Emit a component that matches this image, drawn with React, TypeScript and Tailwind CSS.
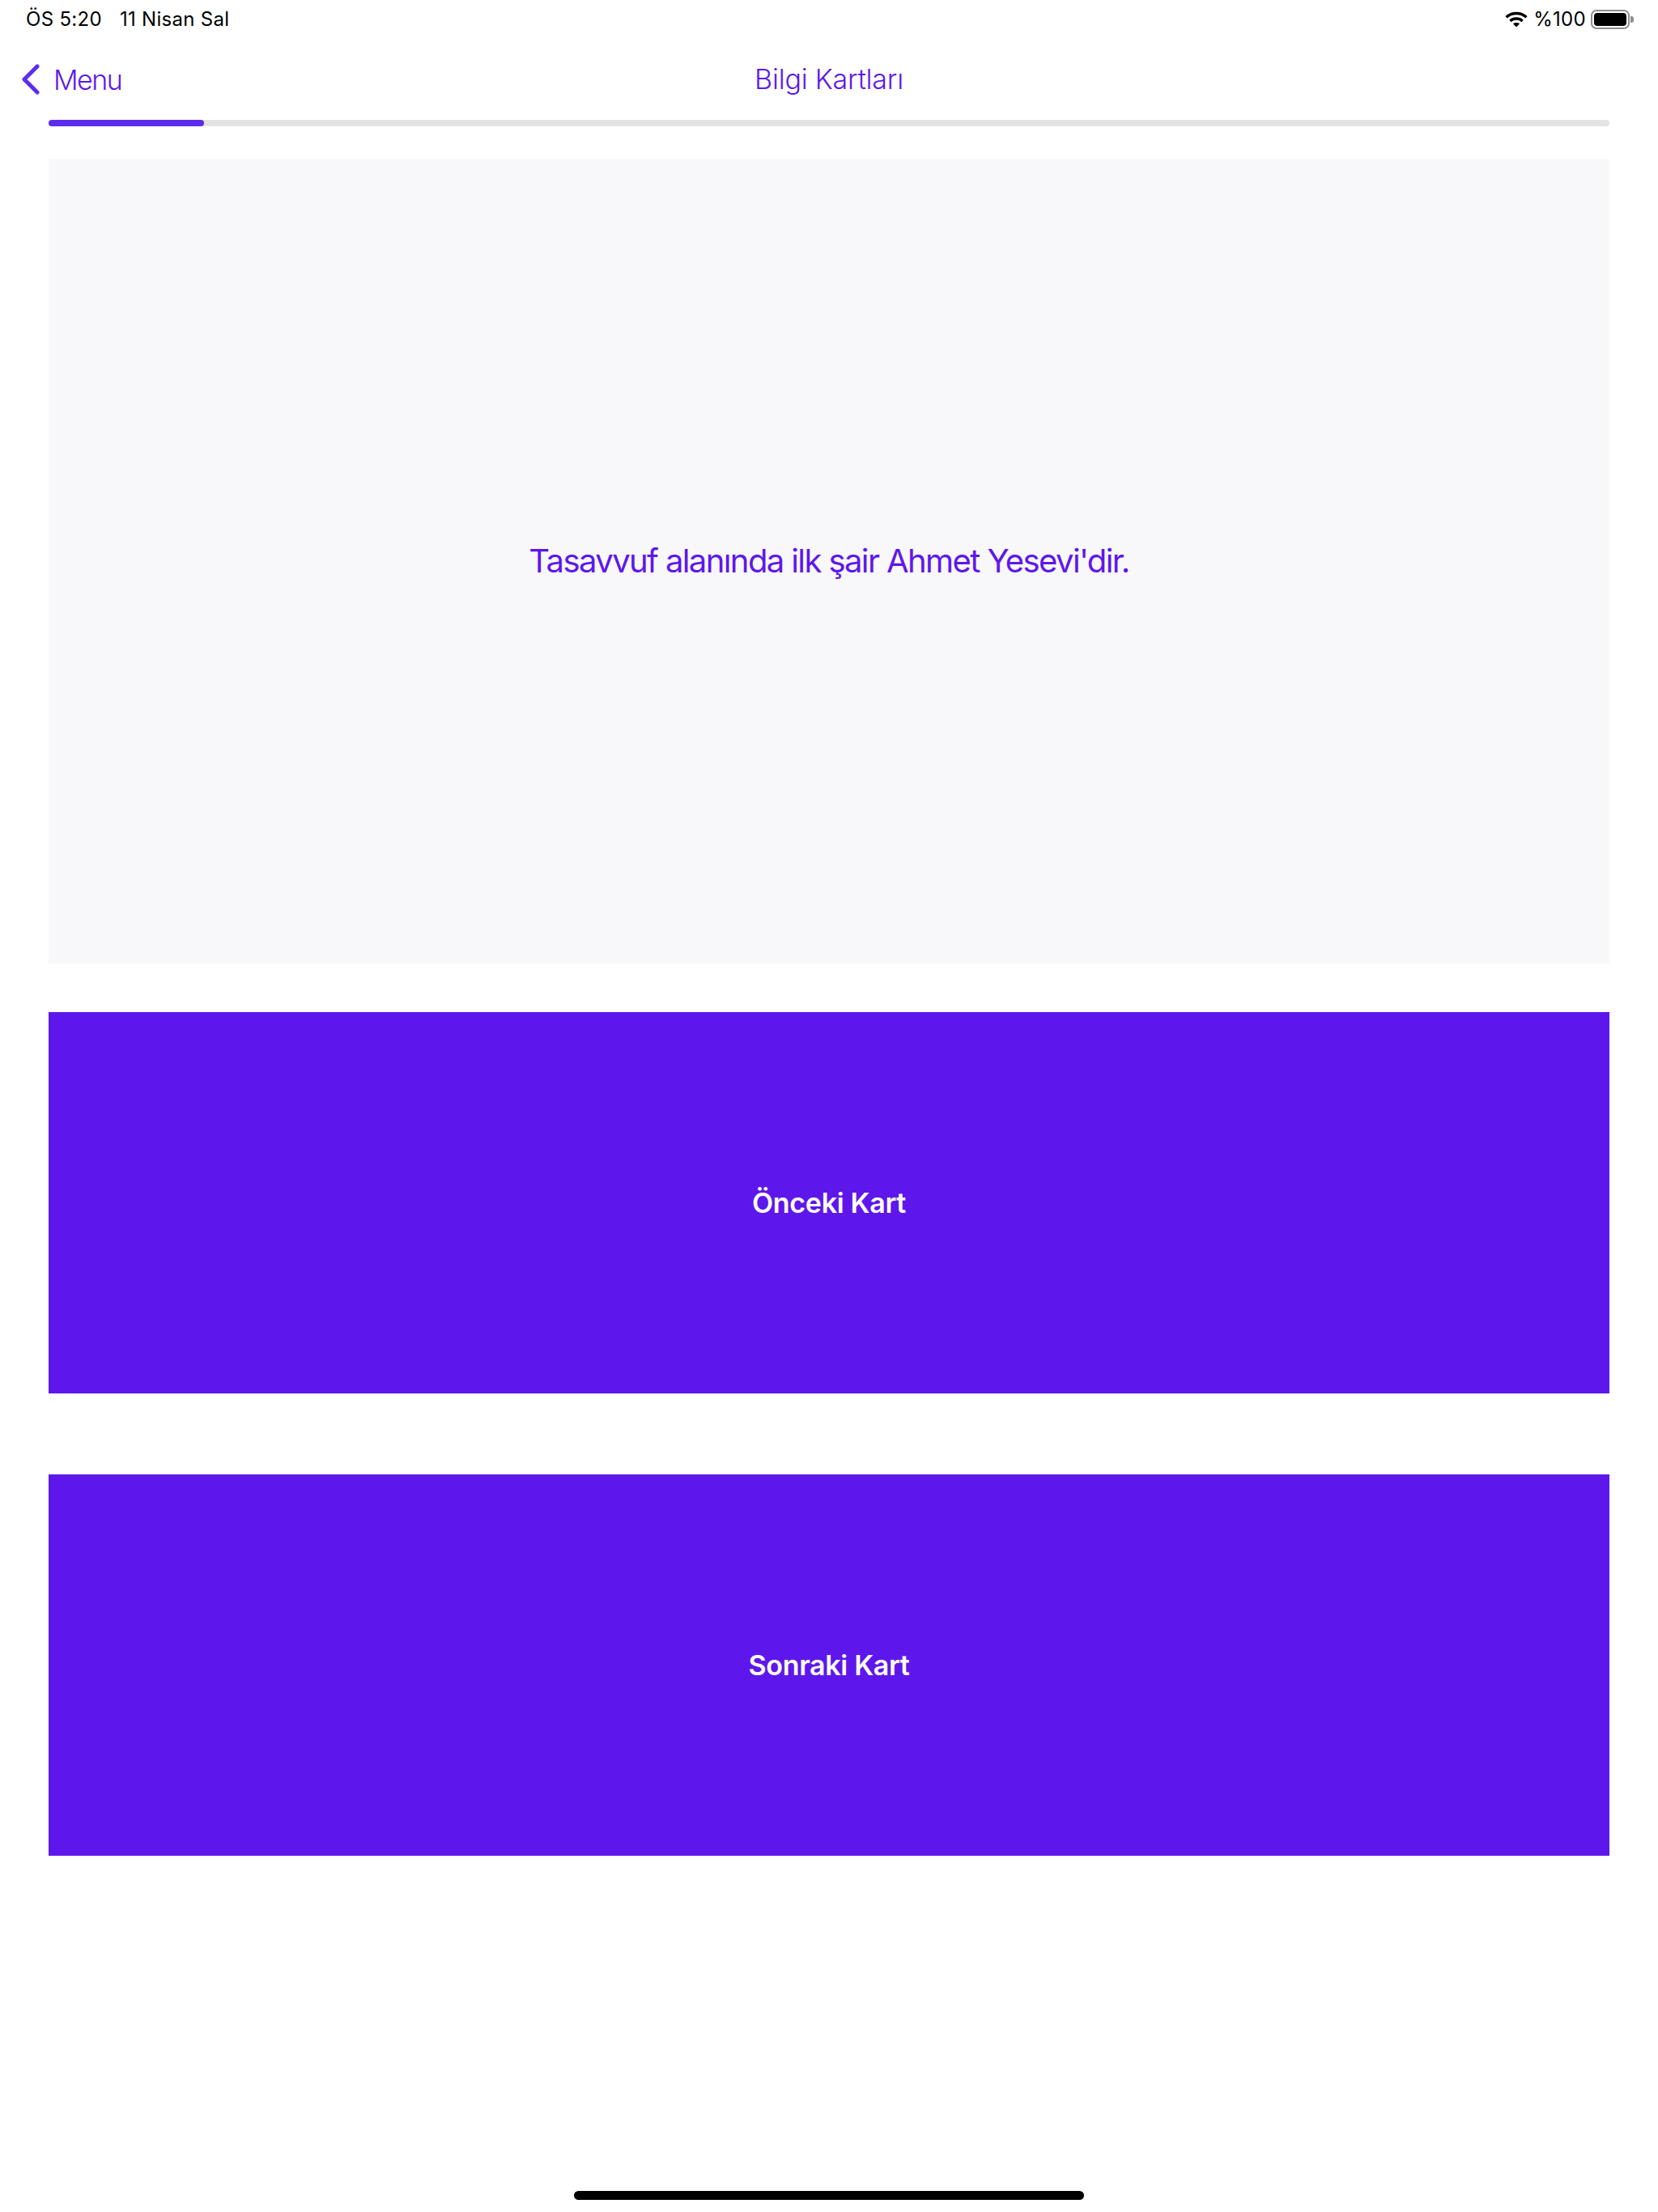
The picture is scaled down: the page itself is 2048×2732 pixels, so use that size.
const PURPLE = "bg-[#5e17eb]";

function Wifi() {
  return (
    <svg width="28" height="20" viewBox="0 0 28 20" fill="none" className="mr-[7px]">
      <path d="M1.5 7.2C8.5 0.9 19.5 0.9 26.5 7.2" stroke="#000" strokeWidth="3.4" />
      <path d="M6.4 11.9C10.8 8.1 17.2 8.1 21.6 11.9" stroke="#000" strokeWidth="3.4" />
      <path d="M14 19.5L9.9 15.3C12.3 13.6 15.7 13.6 18.1 15.3Z" fill="#000" />
    </svg>
  );
}

function Battery() {
  return (
    <div className="flex items-center ml-[6px]">
      <div className="w-[48px] h-[24px] rounded-[7px] border-2 border-[#8e8e8e] p-[2px]">
        <div className="w-full h-full rounded-[4px] bg-black" />
      </div>
      <div className="w-[4px] h-[8px] rounded-r-[3px] bg-[#8e8e8e] ml-[1px]" />
    </div>
  );
}

function Action({ label }: { label: string }) {
  return (
    <button className={`w-full h-[471px] ${PURPLE} flex items-center justify-center text-white text-[34px] font-semibold tracking-[-0.3px]`}>
      {label}
    </button>
  );
}

export default function App() {
  return (
    <div className="w-[2048px] h-[2732px] bg-white flex flex-col font-['Inter','Liberation_Sans',sans-serif] overflow-hidden">
      <div className="h-[48px] flex items-center justify-between pl-[32px] pr-[30px] text-black text-[24px] tracking-[0.3px] shrink-0">
        <div className="flex gap-[22px]">
          <span>ÖS 5:20</span>
          <span>11 Nisan Sal</span>
        </div>
        <div className="flex items-center">
          <Wifi />
          <span>%100</span>
          <Battery />
        </div>
      </div>
      <div className="h-[100px] shrink-0 grid grid-cols-[1fr_auto_1fr] items-center text-[#5e17eb] text-[34px] font-[350]">
        <div className="flex items-center pl-[25px]">
          <svg width="24" height="40" viewBox="0 0 24 40" fill="none">
            <path d="M21 4L5 20L21 36" stroke="#5e2ced" strokeWidth="5" strokeLinecap="round" strokeLinejoin="round" />
          </svg>
          <span className="ml-[17px] tracking-[-1.5px]">Menu</span>
        </div>
        <span className="tracking-[-0.2px] pb-[2px] font-[330]">Bilgi Kartları</span>
        <div />
      </div>
      <div className="mx-[60px] flex flex-col flex-1">
        <div className="h-[8px] rounded-full bg-[#e3e3e3] shrink-0">
          <div className="w-[192px] h-full rounded-full bg-[#5e2ced]" />
        </div>
        <div className="mt-[40px] h-[994px] bg-[#f8f8fa] flex items-center justify-center text-[#5e17eb] text-[40px] font-normal tracking-[-1.6px] shrink-0">
          Tasavvuf alanında ilk şair Ahmet Yesevi'dir.
        </div>
        <div className="mt-[60px]">
          <Action label="Önceki Kart" />
        </div>
        <div className="mt-[100px]">
          <Action label="Sonraki Kart" />
        </div>
      </div>
      <div className="h-[26px] flex justify-center shrink-0">
        <div className="w-[630px] h-[11px] rounded-full bg-black" />
      </div>
    </div>
  );
}
